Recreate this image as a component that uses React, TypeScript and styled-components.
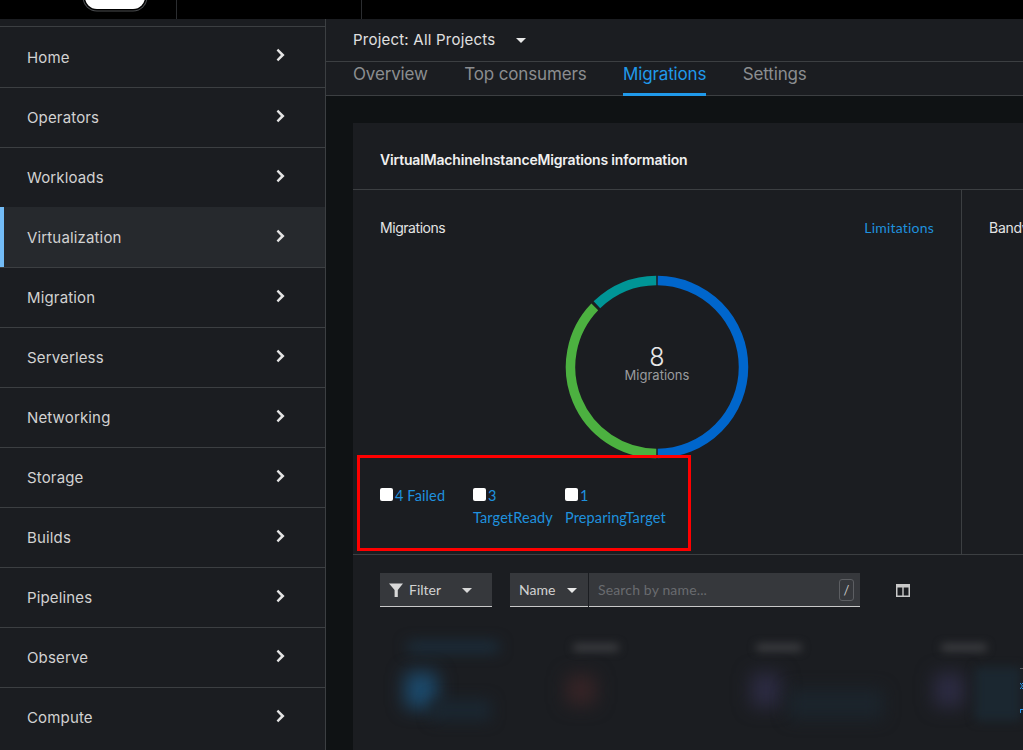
import React from "react";
import styled, { createGlobalStyle } from "styled-components";

const Global = createGlobalStyle`
  html, body { margin: 0; padding: 0; background: #0f1214; overflow: hidden; }
  * { box-sizing: border-box; }
`;
const Page = styled.div`
  width: 1023px; height: 750px; display: flex; flex-direction: column; overflow: hidden;
  font-family: Inter, "Liberation Sans", sans-serif; background: #0f1214;
`;
const Masthead = styled.header`
  height: 19px; flex: none; background: #000; display: flex; position: relative;
`;
const MastCell = styled.div<{ $w: number }>`
  width: ${p => p.$w}px; height: 19px; border-right: 1px solid #2b2d30; flex: none;
`;
const Logo = styled.div`
  position: absolute; left: 85px; top: -10px; width: 60px; height: 19px;
  background: #fff; border-radius: 0 0 12px 12px; box-shadow: 0 0 0 1.5px #000, 0 0 0 2.5px #4a4c4f;
`;
const Body = styled.div`
  flex: 1; display: flex; min-height: 0;
`;
const Sidebar = styled.nav`
  width: 326px; flex: none; background: #1b1d21; border-right: 1px solid #3c3f42; padding-top: 7px;
`;
const NavRow = styled.div<{ $active?: boolean }>`
  height: 60px; display: flex; align-items: center; justify-content: space-between;
  padding: 0 39px 0 27px; position: relative;
  border-top: 1px solid ${p => (p.$active ? "#26292d" : "#3c3f42")};
  background: ${p => (p.$active ? "#26292d" : "transparent")};
  color: #d2d2d2; font-size: 15px; letter-spacing: 0.15px;
  &:first-child { height: 61px; }
  ${p => p.$active ? `&::before { content: ""; position: absolute; left: 0; top: -1px; bottom: 0; width: 4px; background: #73bcf7; }` : ""}
`;
const Chevron = styled.svg`
  width: 10px; height: 14px; margin-top: -4px; fill: #e4e4e4;
`;
const Main = styled.main`
  flex: 1; min-width: 0; display: flex; flex-direction: column;
`;
const ProjectBar = styled.div`
  height: 43px; flex: none; background: #1b1d21; border-bottom: 1px solid #3c3f42;
  display: flex; align-items: center; padding: 0 0 1px 27px; gap: 21px;
  color: #e0e0e0; font-size: 15px; letter-spacing: 0.22px;
`;
const Caret = styled.i<{ $size?: number; $color?: string }>`
  display: block; width: 0; height: 0; margin-top: 2px;
  border-left: ${p => p.$size ?? 5}px solid transparent;
  border-right: ${p => p.$size ?? 5}px solid transparent;
  border-top: ${p => (p.$size ?? 5)}px solid ${p => p.$color ?? "#e8e8e8"};
`;
const Tabs = styled.div`
  height: 34px; flex: none; background: #1b1d21; border-bottom: 1px solid #3c3f42;
  display: flex; gap: 36.5px; padding-left: 27px;
`;
const Tab = styled.div<{ $active?: boolean }>`
  height: 34px; font-size: 17px; line-height: 24px; letter-spacing: -0.15px;
  color: ${p => (p.$active ? "#2099ea" : "#8b8d90")};
  border-bottom: ${p => (p.$active ? "3px solid #2099ea" : "none")};
`;
const Content = styled.div`
  flex: 1; min-height: 0; padding: 27px 0 0 27px; background: #0f1214;
`;
const Card = styled.section`
  height: 640px; background: #1b1d21; display: flex; flex-direction: column;
`;
const CardTitle = styled.h2`
  margin: 0; height: 67px; flex: none; border-bottom: 1px solid #3c3f42;
  padding: 7px 0 0 27px; display: flex; align-items: center;
  color: #f0f0f0; font-size: 14px; font-weight: 600; letter-spacing: -0.17px;
`;
const Panels = styled.div`
  height: 365px; flex: none; display: flex; border-bottom: 1px solid #3c3f42;
`;
const MigrationPanel = styled.div`
  width: 609px; flex: none; border-right: 1px solid #3c3f42; padding: 28px 27px 0 27px;
  display: flex; flex-direction: column;
`;
const PanelHead = styled.div`
  display: flex; justify-content: space-between; font-size: 14px; line-height: 20px; letter-spacing: -0.45px; color: #e4e4e4;
`;
const Link = styled.span`
  color: #1f91de; font-family: Lato, sans-serif; font-size: 14px; letter-spacing: 0.2px;
`;
const Donut = styled.svg`
  display: block; width: 184px; height: 184px; margin: 37px 0 0 185px; flex: none;
`;
const LegendBox = styled.div`
  align-self: flex-start; margin: -4px 0 0 -23px; width: 334px; height: 96px;
  border: 3px solid #f00; display: flex; padding: 27px 0 0 20px;
`;
const LegendItem = styled.div<{ $w: number }>`
  width: ${p => p.$w}px; flex: none; display: flex; align-items: flex-start; gap: 2px;
`;
const Swatch = styled.i`
  display: block; width: 13px; height: 13px; background: #fff; border-radius: 2px; flex: none; margin-top: 3px;
`;
const LegendText = styled.span`
  color: #1f91de; font-family: Lato, sans-serif; font-size: 14.5px; letter-spacing: 0.12px; line-height: 22px;
`;
const Wrapped = styled(LegendText)`
  margin-left: -15px; display: block; white-space: nowrap;
`;
const LegendCol = styled.div`
  display: flex; flex-direction: column;
`;
const SidePanel = styled.div`
  flex: 1; padding: 28px 0 0 27px; overflow: hidden; white-space: nowrap;
  font-size: 14px; line-height: 20px; letter-spacing: -0.25px; color: #e4e4e4;
`;
const Toolbar = styled.div`
  display: flex; align-items: center; padding: 18px 0 0 27px; height: 52px; flex: none;
  font-family: Lato, sans-serif; font-size: 14px; color: #d2d2d2;
`;
const Control = styled.div<{ $w: number }>`
  width: ${p => p.$w}px; height: 34px; background: #36383c; border-bottom: 1px solid #c9c9c9; flex: none;
  display: flex; align-items: center;
`;
const FilterBox = styled(Control)`
  padding: 0 0 0 8px; gap: 5px;
`;
const FilterCaret = styled(Caret)`
  margin-left: 16px;
`;
const NameBox = styled(Control)`
  padding: 0 0 0 9px; gap: 12px; margin-left: 18px;
`;
const SearchBox = styled(Control)`
  margin-left: 1px; padding: 0 6px 0 9px; justify-content: space-between; color: #696b6f; letter-spacing: 0.15px;
`;
const SlashKey = styled.span`
  width: 15px; height: 22px; border: 1px solid #5c5e62; border-radius: 3px; color: #c9c9c9;
  font-size: 13px; display: flex; align-items: center; justify-content: center;
`;
const ColumnsIcon = styled.svg`
  width: 14px; height: 13px; margin-left: 36px; flex: none;
`;
const Blurred = styled.div`
  position: relative; flex: 1; overflow: hidden;
`;
const Smudge = styled.div<{ $x: number; $y: number; $w: number; $h: number; $c: string; $b: number }>`
  position: absolute; left: ${p => p.$x}px; top: ${p => p.$y}px; width: ${p => p.$w}px; height: ${p => p.$h}px;
  background: ${p => p.$c}; filter: blur(${p => p.$b}px); border-radius: 4px;
`;
const EdgeMark = styled.svg`
  position: absolute; left: 667px; top: 58px; width: 3px; height: 50px;
`;

const items = ["Home","Operators","Workloads","Virtualization","Migration","Serverless","Networking","Storage","Builds","Pipelines","Observe","Compute"];

const R = 86.5;
const C = { x: 92, y: 92 };
const arc = (a: number, b: number) => {
  const p = (d: number) => {
    const t = (d - 90) * Math.PI / 180;
    return `${C.x + R * Math.cos(t)} ${C.y + R * Math.sin(t)}`;
  };
  return `M ${p(a)} A ${R} ${R} 0 ${b - a > 180 ? 1 : 0} 1 ${p(b)}`;
};

export default function App() {
  return (
    <Page>
      <Global />
      <Masthead>
        <MastCell $w={177} />
        <MastCell $w={185} />
        <Logo />
      </Masthead>
      <Body>
        <Sidebar>
          {items.map(n => (
            <NavRow key={n} $active={n === "Virtualization"}>
              {n}
              <Chevron viewBox="0 0 10 14"><path d="M2.2 0.8 L8.6 7 L2.2 13.2 L0.6 11.4 L4.9 7 L0.6 2.6 Z" /></Chevron>
            </NavRow>
          ))}
        </Sidebar>
        <Main>
          <ProjectBar>Project: All Projects<Caret /></ProjectBar>
          <Tabs>
            <Tab>Overview</Tab>
            <Tab>Top consumers</Tab>
            <Tab $active>Migrations</Tab>
            <Tab>Settings</Tab>
          </Tabs>
          <Content>
            <Card>
              <CardTitle>VirtualMachineInstanceMigrations information</CardTitle>
              <Panels>
                <MigrationPanel>
                  <PanelHead>Migrations<Link>Limitations</Link></PanelHead>
                  <Donut viewBox="0 0 184 184">
                    <g fill="none" strokeWidth="9.5">
                      <path d={arc(0.5, 179.5)} stroke="#06c" />
                      <path d={arc(180.5, 314)} stroke="#4cb140" />
                      <path d={arc(316, 359.5)} stroke="#009596" />
                    </g>
                    <text x="92" y="91" textAnchor="middle" fontFamily="Inter, sans-serif" fontSize="25" fontWeight="300" fill="#e8e8e8">8</text>
                    <text x="92" y="105" textAnchor="middle" fontFamily="Inter, sans-serif" fontSize="13" fill="#9a9b9e">Migrations</text>
                  </Donut>
                  <LegendBox>
                    <LegendItem $w={93}><Swatch /><LegendText>4 Failed</LegendText></LegendItem>
                    <LegendItem $w={92}><Swatch /><LegendCol><LegendText>3</LegendText><Wrapped>TargetReady</Wrapped></LegendCol></LegendItem>
                    <LegendItem $w={110}><Swatch /><LegendCol><LegendText>1</LegendText><Wrapped>PreparingTarget</Wrapped></LegendCol></LegendItem>
                  </LegendBox>
                </MigrationPanel>
                <SidePanel>Bandwidth</SidePanel>
              </Panels>
              <Toolbar>
                <FilterBox $w={112}>
                  <svg width="16" height="16" viewBox="0 0 16 16"><path fill="#d8d8d8" d="M1 1.5 H15 L9.8 8 V15 H6.6 V8 Z" /></svg>
                  Filter
                  <FilterCaret $color="#d8d8d8" />
                </FilterBox>
                <NameBox $w={78}>Name<Caret $color="#e8e8e8" /></NameBox>
                <SearchBox $w={271}>Search by name...<SlashKey>/</SlashKey></SearchBox>
                <ColumnsIcon viewBox="0 0 14 13"><path fill="#c9c9c9" fillRule="evenodd" d="M0 0 H14 V13 H0 Z M1.5 3.5 V11.5 H6.3 V3.5 Z M7.7 3.5 V11.5 H12.5 V3.5 Z" /></ColumnsIcon>
              </Toolbar>
              <Blurred>
                <Smudge $x={54} $y={35} $w={92} $h={10} $c="#1b3040" $b={7} />
                <Smudge $x={52} $y={65} $w={32} $h={36} $c="#1c4a6c" $b={9} />
                <Smudge $x={78} $y={92} $w={60} $h={22} $c="#1a2630" $b={7} />
                <Smudge $x={220} $y={37} $w={46} $h={7} $c="#404144" $b={4} />
                <Smudge $x={213} $y={68} $w={30} $h={30} $c="#362426" $b={9} />
                <Smudge $x={403} $y={37} $w={46} $h={7} $c="#404144" $b={4} />
                <Smudge $x={398} $y={66} $w={30} $h={34} $c="#2c2b42" $b={9} />
                <Smudge $x={435} $y={82} $w={95} $h={30} $c="#1b242c" $b={8} />
                <Smudge $x={588} $y={37} $w={46} $h={7} $c="#404144" $b={4} />
                <Smudge $x={581} $y={66} $w={30} $h={34} $c="#2c2b42" $b={9} />
                <Smudge $x={622} $y={60} $w={46} $h={54} $c="#1b2730" $b={5} />
                <EdgeMark viewBox="0 0 3 50">
                  <path d="M0 3.5 H3" stroke="#5a5c60" />
                  <path d="M0 18 L2.5 21 L0 24 M2.5 18 V19 M2.5 23 V24 M0 44.5 H3 M0.5 44.5 V48" fill="none" stroke="#2b9af3" />
                </EdgeMark>
              </Blurred>
            </Card>
          </Content>
        </Main>
      </Body>
    </Page>
  );
}
